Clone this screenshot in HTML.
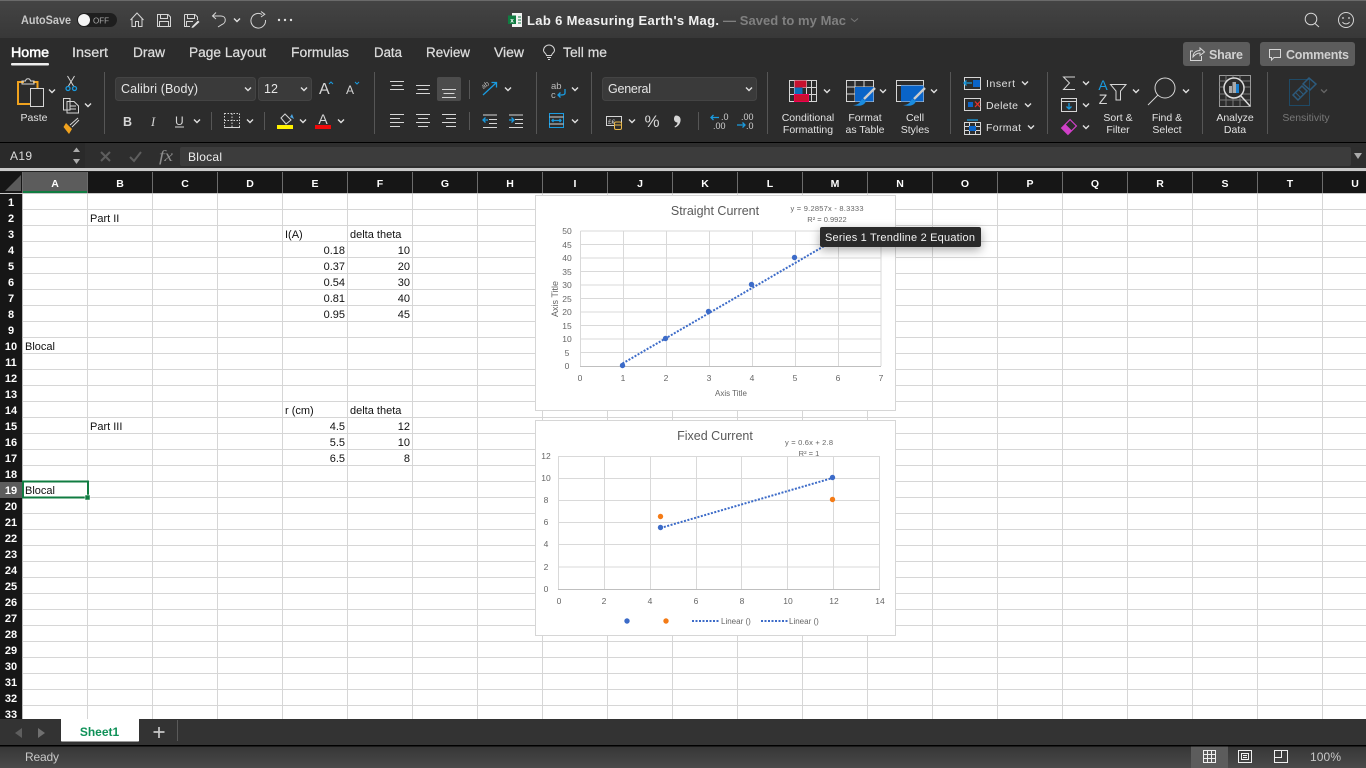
<!DOCTYPE html>
<html><head><meta charset="utf-8"><title>Lab 6 Measuring Earth's Mag.</title>
<style>
html,body{margin:0;padding:0;background:#fff;width:1366px;height:768px;overflow:hidden}
svg{display:block;font-family:"Liberation Sans",sans-serif}
.c{text-anchor:middle}.e{text-anchor:end}
.rb{font-size:10.5px;fill:#e2e2e2;text-anchor:middle}
.tab{font-size:13.5px;fill:#dcdcdc;stroke:#dcdcdc;stroke-width:.25}
.ic{fill:none;stroke:#d6d6d6;stroke-width:1}
.bl{fill:none;stroke:#1a9be0;stroke-width:1.3}
.col{font-size:10.5px;fill:#fff;text-anchor:middle;font-weight:bold}
.row{font-size:11px;fill:#fff;text-anchor:middle;font-weight:bold}
.cell{font-size:11px;fill:#111}
.ax{font-size:8.5px;fill:#666;text-anchor:middle}
.sm{font-size:7.5px;fill:#666;text-anchor:middle}
.tl{stroke:#3c6bc8;stroke-width:2;stroke-dasharray:2 1.5;fill:none}
</style></head><body>
<svg width="1366" height="768" viewBox="0 0 1366 768" xmlns="http://www.w3.org/2000/svg">
<defs>
<pattern id="g" x="23" y="194" width="65" height="16" patternUnits="userSpaceOnUse"><rect x="64" width="1" height="16" fill="#d6d6d6"/><rect y="15" width="65" height="1" fill="#d6d6d6"/></pattern>
<linearGradient id="sb" x1="0" y1="0" x2="0" y2="1"><stop offset="0" stop-color="#363636"/><stop offset="1" stop-color="#4a4a4a"/></linearGradient>
<linearGradient id="tb" x1="0" y1="0" x2="0" y2="1"><stop offset="0" stop-color="#444"/><stop offset="1" stop-color="#383838"/></linearGradient>
<path id="v" d="M-3-1.5 0 1.5 3-1.5" fill="none" stroke="#e0e0e0" stroke-width="1.4"/>
<filter id="sh" x="-20%" y="-50%" width="140%" height="220%"><feDropShadow dx="0" dy="3" stdDeviation="5" flood-color="#000" flood-opacity=".35"/></filter>
</defs>

<!-- backgrounds -->
<rect width="1366" height="38" fill="url(#tb)"/>
<rect width="1366" height="1" fill="#6a6a6a"/>
<rect y="38" width="1366" height="104" fill="#2c2c2c"/>
<rect y="142" width="1366" height="1.5" fill="#000"/>
<rect y="143" width="1366" height="25" fill="#2e2e2e"/>
<rect y="168" width="1366" height="4" fill="#c9c9c9"/>
<rect y="171" width="1366" height="1" fill="#222"/>
<rect y="194" width="1366" height="525" fill="#fff"/>
<rect x="23" y="194" width="1343" height="525" fill="url(#g)"/>

<!-- title bar -->
<text x="21" y="24" font-size="11.5" font-weight="bold" fill="#c8c8c8" textLength="50" lengthAdjust="spacingAndGlyphs">AutoSave</text>
<rect x="77" y="13" width="40" height="14" rx="7" fill="#1e1e1e"/><circle cx="84" cy="20" r="6" fill="#f4f4f4"/>
<text x="93" y="23.500" font-size="8" fill="#aaa" textLength="16">OFF</text>
<path class="ic" stroke-width="1.3" d="M130.500 20 137 13 143.500 20M132 18.500V26.500H135.500V21.500H138.500V26.500H142V18.500"/>
<path class="ic" d="M157.500 14.500H168L170.500 17V26.500H157.500ZM160.500 14.500V18.500H167.500V14.500M159.500 26.500V21.500H168.500V26.500"/>
<path class="ic" d="M184.500 14.500H195L197.500 17V20M184.500 14.500V26.500H190M187.500 14.500V18.500H194.500V14.500M186.500 26V21.500H193"/>
<path d="M192 26.500 198 20.500 199.500 22 193.500 27.500 191.500 28Z" fill="#e0e0e0"/>
<path class="ic" stroke-width="1.2" d="M216 12.500 212.500 16 216 19M212.500 16H221C226.500 16 226.500 23 222 24.500L218 27"/>
<use href="#v" x="237" y="20"/>
<path class="ic" stroke-width="1.2" d="M262 14.500A7.300 7.300 0 1 0 265.500 20M261 11.500 264.800 14.300 261 17"/>
<circle cx="279" cy="20" r="1.200" fill="#e0e0e0"/><circle cx="285" cy="20" r="1.200" fill="#e0e0e0"/><circle cx="291" cy="20" r="1.200" fill="#e0e0e0"/>

<rect x="512" y="13" width="10" height="14" fill="#f2f2f2"/><rect x="508" y="15.500" width="8" height="8.500" fill="#107c41"/>
<text x="512" y="22.500" font-size="6.500" font-weight="bold" fill="#fff" class="c">x</text>
<path d="M518 17h3M518 20h3M518 23h3" stroke="#107c41"/>
<text x="527" y="25" font-size="13" font-weight="bold" fill="#f0f0f0" textLength="192">Lab 6 Measuring Earth's Mag.</text>
<text x="723" y="25" font-size="13" font-weight="bold" fill="#808080" textLength="123">— Saved to my Mac</text>
<path d="M851 18.500 854.500 21.500 858 18.500" fill="none" stroke="#777"/>
<circle cx="1311" cy="19" r="5.800" class="ic" stroke-width="1.200"/><path class="ic" stroke-width="1.200" d="M1315 23.500 1319 27"/>
<circle cx="1346" cy="20" r="7.500" class="ic" stroke-width="1.100"/><circle cx="1343" cy="18" r=".9" fill="#ddd"/><circle cx="1349" cy="18" r=".9" fill="#ddd"/><path class="ic" d="M1342.500 22C1344 24.500 1348 24.500 1349.500 22"/>

<!-- tabs -->
<text x="11" y="57" class="tab" style="fill:#fff;stroke:#fff;stroke-width:.5" textLength="38" lengthAdjust="spacingAndGlyphs">Home</text>
<rect x="11" y="63" width="38" height="2.500" rx="1" fill="#eee"/>
<text x="72" y="57" class="tab" textLength="36" lengthAdjust="spacingAndGlyphs">Insert</text>
<text x="133" y="57" class="tab" textLength="32" lengthAdjust="spacingAndGlyphs">Draw</text>
<text x="189" y="57" class="tab" textLength="77" lengthAdjust="spacingAndGlyphs">Page Layout</text>
<text x="291" y="57" class="tab" textLength="58" lengthAdjust="spacingAndGlyphs">Formulas</text>
<text x="374" y="57" class="tab" textLength="28" lengthAdjust="spacingAndGlyphs">Data</text>
<text x="426" y="57" class="tab" textLength="44" lengthAdjust="spacingAndGlyphs">Review</text>
<text x="494" y="57" class="tab" textLength="30" lengthAdjust="spacingAndGlyphs">View</text>
<path class="ic" d="M546.500 55.500C546.500 53.500 543.500 52.500 543.500 50.500A5.500 5.500 0 0 1 554.500 50.500C554.500 52.500 551.500 53.500 551.500 55.500ZM547 57.500H551M548 59.500H550"/>
<text x="563" y="57" class="tab" textLength="44" lengthAdjust="spacingAndGlyphs">Tell me</text>
<rect x="1183" y="42" width="67" height="24" rx="3" fill="#5c5c5c"/>
<path class="ic" stroke="#bbb" d="M1193 51H1190.500V60.500H1201.500V56M1193 57C1193 52 1197 50.500 1200 50.500V48L1204.500 52 1200 55.500V53C1197 53 1195 54.500 1193 57Z"/>
<text x="1209" y="59" font-size="12.500" font-weight="bold" fill="#d0d0d0" textLength="34">Share</text>
<rect x="1260" y="42" width="95" height="24" rx="3" fill="#5c5c5c"/>
<path class="ic" d="M1269.500 49.500H1280.500V57.500H1274L1271.500 60V57.500H1269.500Z"/>
<text x="1286" y="59" font-size="12.500" font-weight="bold" fill="#d0d0d0" textLength="63">Comments</text>

<!-- separators -->
<g fill="#565656"><rect x="104" y="72" width="1" height="62"/><rect x="374" y="72" width="1" height="62"/><rect x="536" y="72" width="1" height="62"/><rect x="591" y="72" width="1" height="62"/><rect x="767" y="72" width="1" height="62"/><rect x="950" y="72" width="1" height="62"/><rect x="1047" y="72" width="1" height="62"/><rect x="1202" y="72" width="1" height="62"/><rect x="1267" y="72" width="1" height="62"/><rect x="211" y="112" width="1" height="18"/><rect x="264" y="112" width="1" height="18"/><rect x="469" y="80" width="1" height="19"/><rect x="469" y="112" width="1" height="18"/><rect x="698" y="112" width="1" height="18"/></g>

<!-- clipboard -->
<path d="M24 82H18V104H30" fill="none" stroke="#f0a21e" stroke-width="2"/><path d="M33 82H37.500V88" fill="none" stroke="#f0a21e" stroke-width="2"/>
<path class="ic" stroke="#999" d="M22 84V81H25.500C26 78 30 78 30.500 81H34V84Z"/>
<rect x="30.500" y="88.500" width="13" height="18" fill="#2c2c2c" stroke="#d6d6d6"/>
<use href="#v" x="52" y="91"/>
<text x="34" y="121" class="rb c" textLength="27">Paste</text>
<path class="ic" d="M67.500 76 73.500 86M74.500 76 68.500 86"/><circle cx="68" cy="88.500" r="2" class="bl"/><circle cx="74.500" cy="88.500" r="2" class="bl"/>
<path class="ic" d="M63.500 98.500H70V110H63.500ZM67 101.500H74L78.500 106V113H67ZM70 106H76M70 109H76"/>
<use href="#v" x="88" y="105"/>
<path d="M66 123 72 129 69 134 63.500 127Z" fill="#f0a21e"/><path class="ic" d="M70 125 78 118M72 127 79 120"/>

<!-- font -->
<rect x="115.500" y="77.500" width="140" height="23" rx="3" fill="#3a3a3a" stroke="#444"/>
<text x="121" y="93" font-size="12.500" fill="#e6e6e6" textLength="77">Calibri (Body)</text><use href="#v" x="248" y="89"/>
<rect x="258.500" y="77.500" width="53" height="23" rx="3" fill="#3a3a3a" stroke="#444"/>
<text x="264" y="93" font-size="12.500" fill="#e6e6e6">12</text><use href="#v" x="304" y="89"/>
<text x="319" y="94" font-size="16" fill="#d6d6d6">A</text><path d="M329 84 331 82 333 84" fill="none" stroke="#1a9be0"/>
<text x="346" y="94" font-size="12" fill="#d6d6d6">A</text><path d="M355 82 357 84 359 82" fill="none" stroke="#1a9be0"/>
<text x="123" y="126" font-size="12.500" font-weight="bold" fill="#d6d6d6">B</text>
<text x="151" y="126" font-size="12.500" font-style="italic" font-family="Liberation Serif" fill="#d6d6d6">I</text>
<text x="175" y="125" font-size="12" fill="#d6d6d6">U</text><rect x="175" y="126.500" width="9" height="1" fill="#d6d6d6"/>
<use href="#v" x="197" y="121"/>
<path class="ic" stroke-dasharray="1.500 1.500" d="M224.500 113.500H239.500V127.500H224.500ZM232 113.500V127.500M224.500 120.500H239.500"/><path class="ic" d="M224 127.500H240"/>
<use href="#v" x="250" y="121"/>
<path class="ic" d="M281 118 285 114 291 120 286 124Z"/><path d="M290 117 292 114 294 119Z" fill="#4aa3e0"/>
<rect x="277" y="125" width="16" height="4" fill="#fff200"/><use href="#v" x="303" y="121"/>
<text x="323" y="124" font-size="14" fill="#d6d6d6" class="c">A</text><rect x="315" y="125" width="16" height="4" fill="#ef0a0a"/><use href="#v" x="341" y="121"/>

<!-- align -->
<rect x="437" y="77" width="24" height="24" rx="2" fill="#4c4c4c"/>
<path class="ic" d="M390 81.500H404M391.500 85.500H402.500M390 89.500H404M416 85.500H430M417.500 89.500H428.500M416 93.500H430M442 89.500H456M443.500 93.500H454.500M442 97.500H456"/>
<path class="ic" d="M390 114.500H404M390 118.500H400M390 122.500H404M390 126.500H400M416 114.500H430M418 118.500H428M416 122.500H430M418 126.500H428M442 114.500H456M446 118.500H456M442 122.500H456M446 126.500H456"/>
<g transform="translate(482,80)"><text x="0" y="7" font-size="7" fill="#bbb" transform="rotate(-35 4 6)">ab</text><path class="bl" d="M1 15 14 3M9.500 2.500H14.500V7.500"/></g><use href="#v" x="508" y="89"/>
<path class="ic" d="M489 119.500H497M489 123.500H497M483 127.500H497M483 115 497 115"/><path class="bl" d="M483 120H488M485.500 117.500 483 120 485.500 122.500"/>
<path class="ic" d="M509 115 523 115M515 119.500H523M515 123.500H523M509 127.500H523"/><path class="bl" d="M509 120H514M511.500 117.500 514 120 511.500 122.500"/>
<text x="551" y="89" font-size="9.500" fill="#bbb">ab</text><text x="551" y="98" font-size="9.500" fill="#bbb">c</text><path class="bl" d="M565 89V93C565 95 563 95 558 95M560.500 92.500 558 95 560.500 97.500"/><use href="#v" x="575" y="89"/>
<rect x="549.500" y="113.500" width="14" height="14" fill="none" stroke="#1a9be0"/><path class="ic" d="M549.500 117H563.500M549.500 124H563.500"/><path class="bl" stroke-width="1" d="M552 120.500H561M553.500 119 552 120.500 553.500 122M559.500 119 561 120.500 559.500 122"/><use href="#v" x="575" y="121"/>

<!-- number -->
<rect x="602.500" y="77.500" width="154" height="23" rx="3" fill="#3a3a3a" stroke="#444"/>
<text x="608" y="93" font-size="12.500" fill="#e6e6e6" textLength="43">General</text><use href="#v" x="749" y="89"/>
<rect x="606.500" y="116.500" width="15" height="9" class="ic"/><text x="608" y="124" font-size="6.500" fill="#ccc">£€</text>
<rect x="614.500" y="122" width="7" height="7.500" rx="1.500" fill="#2c2c2c" stroke="#eab84a"/><path d="M614.500 125H621.500" stroke="#eab84a"/>
<use href="#v" x="632" y="121"/>
<text x="652" y="127" font-size="17" fill="#d6d6d6" class="c">%</text>
<path d="M676 115.500C679.500 115.500 681 118 680.500 121 680 124 678 126.500 675 127.500L674.500 126.500C676.500 125.500 677.500 124 677.500 122.500 675.500 122.500 674 121 674 119 674 117 675 115.500 676 115.500Z" fill="#d6d6d6"/>
<text x="721" y="120" font-size="9" fill="#d0d0d0">.0</text><text x="713" y="129" font-size="9" fill="#d0d0d0">.00</text><path class="bl" d="M711 117.500H719M713.500 115 711 117.500 713.500 120"/>
<text x="741" y="120" font-size="9" fill="#d0d0d0">.00</text><text x="746" y="129" font-size="9" fill="#d0d0d0">.0</text><path class="bl" d="M737 125H745M742.500 122.500 745 125 742.500 127.500"/>

<!-- styles -->
<g transform="translate(789,80)"><rect x=".5" y=".5" width="27" height="21" class="ic"/><path class="ic" d="M0.500 7.500H27.500M0.500 14.500H27.500M5.500 .5V21.500M17.500 .5V21.500M22.500 .5V21.500"/><rect x="5.500" y=".5" width="12" height="7" fill="#c8102e"/><rect x="5.500" y="7.500" width="8" height="7" fill="#0a6fb8"/><rect x="5.500" y="14.500" width="14" height="7" fill="#c8102e" stroke="#e05"/></g>
<use href="#v" x="827" y="91"/>
<text x="808" y="121" class="rb">Conditional</text><text x="808" y="133" class="rb">Formatting</text>
<g transform="translate(846,80)"><rect x=".5" y=".5" width="27" height="21" class="ic"/><path class="ic" d="M.5 7H27.500M.5 14H27.500M9 .5V21.500M18 .5V21.500"/><rect x="9" y="7" width="18.500" height="14.500" fill="#0a64c8"/><path d="M7 25C13 25 14 22 16 19L20 21C19 25 14 27 7 25Z" fill="#1a8ce0"/><path d="M18 19 29 8" stroke="#ccc" stroke-width="2.400"/></g>
<use href="#v" x="883" y="91"/>
<text x="865" y="121" class="rb">Format</text><text x="865" y="133" class="rb">as Table</text>
<g transform="translate(896,80)"><rect x=".5" y=".5" width="27" height="21" class="ic"/><path class="ic" d="M.5 5.500H27.500"/><rect x="5" y="5.500" width="22.500" height="16" fill="#0a64c8"/><path d="M7 25C13 25 14 22 16 19L20 21C19 25 14 27 7 25Z" fill="#1a8ce0"/><path d="M18 19 29 8" stroke="#ccc" stroke-width="2.400"/></g>
<use href="#v" x="934" y="91"/>
<text x="915" y="121" class="rb">Cell</text><text x="915" y="133" class="rb">Styles</text>

<!-- cells -->
<rect x="964.500" y="77.500" width="16" height="12" class="ic"/><rect x="973" y="80" width="7" height="7" fill="#0a64c8"/><path class="bl" d="M964 83H972M966.500 80.500 964 83 966.500 85.500"/>
<text x="986" y="87" class="rb" style="text-anchor:start" textLength="29">Insert</text><use href="#v" x="1025" y="83"/>
<rect x="964.500" y="98.500" width="16" height="12" class="ic"/><rect x="968" y="102" width="5" height="5" fill="#0a64c8"/><path stroke="#e8302a" stroke-width="1.300" d="M975 101.500 980 107M980 101.500 975 107"/>
<text x="986" y="109" class="rb" style="text-anchor:start" textLength="32">Delete</text><use href="#v" x="1028" y="105"/>
<rect x="964.500" y="122.500" width="16" height="12" class="ic"/><path class="ic" d="M964.500 126.500H980.500M964.500 130.500H980.500M969.500 122.500V134.500M975.500 122.500V134.500"/><rect x="969" y="126" width="7" height="5" fill="#0a64c8"/><path class="bl" stroke-width="1" d="M967 120H978"/>
<text x="986" y="131" class="rb" style="text-anchor:start" textLength="35">Format</text><use href="#v" x="1031" y="127"/>

<!-- edit -->
<path class="ic" d="M1075 77H1063.500L1069.500 83 1063.500 89.500H1075"/><use href="#v" x="1086" y="83"/>
<rect x="1061.500" y="98.500" width="15" height="13" class="ic"/><path class="ic" d="M1061.500 101.500H1076.500"/><path class="bl" d="M1069 103V109M1066.500 106.500 1069 109 1071.500 106.500"/><use href="#v" x="1086" y="105"/>
<g transform="rotate(-45 1069 127)"><rect x="1063" y="122.500" width="12" height="9" fill="none" stroke="#d040c8" stroke-width="1.200"/><rect x="1063" y="122.500" width="5.500" height="9" fill="#d040c8"/></g><use href="#v" x="1086" y="127"/>
<text x="1103" y="90" font-size="14" fill="#1a9be0" class="c">A</text><text x="1103" y="104" font-size="14" fill="#d6d6d6" class="c">Z</text>
<path class="ic" d="M1110.500 84.500H1126L1120.500 91V100H1116V91Z"/><use href="#v" x="1136" y="91"/>
<text x="1118" y="121" class="rb">Sort &amp;</text><text x="1118" y="133" class="rb">Filter</text>
<circle cx="1165" cy="88" r="10" class="ic"/><path class="ic" d="M1158 95 1148 105"/><use href="#v" x="1186" y="91"/>
<text x="1167" y="121" class="rb">Find &amp;</text><text x="1167" y="133" class="rb">Select</text>
<g transform="translate(1219,75)"><rect x=".5" y=".5" width="31" height="31" fill="none" stroke="#999"/><path stroke="#777" fill="none" d="M.5 6H31M.5 12H31M.5 19H31M.5 25H31M7 .5V31M14 .5V31M21 .5V31"/><circle cx="15" cy="13" r="10" fill="#2c2c2c" stroke="#ddd" stroke-width="1.500"/><rect x="10" y="11" width="3" height="7" fill="#aaa"/><rect x="13.500" y="7" width="3.500" height="11" fill="#aaa"/><rect x="17" y="9" width="3" height="9" fill="#1a80d0"/><path d="M22 21 31 31" stroke="#ddd" stroke-width="1.500"/></g>
<text x="1235" y="121" class="rb">Analyze</text><text x="1235" y="133" class="rb">Data</text>
<g transform="translate(1289,77)"><rect x=".5" y="2.500" width="20" height="26" fill="none" stroke="#1f4a66"/><path d="M4 18 13 9 18 14 9 23Z" fill="none" stroke="#2c5a7c" stroke-width="1.500"/><path d="M14 7 20 1 27 7 21 13Z" fill="none" stroke="#2c5a7c" stroke-width="1.500"/><path d="M7 16 12 21M10 13 15 18" stroke="#2c5a7c"/></g>
<path d="M1321 89.500 1324 92.500 1327 89.500" fill="none" stroke="#666" stroke-width="1.300"/>
<text x="1306" y="121" class="rb" style="fill:#777">Sensitivity</text>

<!-- formula bar -->
<rect x="0" y="143" width="85" height="25" fill="#2a2a2a"/>
<text x="10" y="160" font-size="12" fill="#dcdcdc" textLength="22">A19</text>
<path d="M73 152 76.500 147.500 80 152ZM73 159 76.500 164 80 159Z" fill="#aaa"/>
<path stroke="#5e5e5e" stroke-width="2" d="M101 152 110 161M110 152 101 161"/>
<path stroke="#5e5e5e" stroke-width="2" fill="none" d="M130 157 134 161 141 152"/>
<text x="159" y="161" font-size="16" font-style="italic" font-family="Liberation Serif" fill="#8e8e8e" textLength="14" lengthAdjust="spacingAndGlyphs">fx</text>
<rect x="180" y="147" width="1171" height="19" rx="2" fill="#3c3c3c"/>
<text x="188" y="161" font-size="12" fill="#eee" textLength="34">Blocal</text>
<path d="M1354 153H1362L1358 159Z" fill="#aaa"/>

<!-- column headers -->
<rect y="172" width="1366" height="21" fill="#161616"/><rect y="193" width="1366" height="1" fill="#c8c8c8"/>
<path d="M21 175V191H5Z" fill="#5a5a5a"/>
<rect x="23" y="172" width="65" height="21" fill="#5c5c5c"/><rect x="23" y="191" width="65" height="2" fill="#107c41"/>
<g fill="#6c6c6c"><rect x="22" y="172" width="1" height="21"/><rect x="87" y="172" width="1" height="21"/><rect x="152" y="172" width="1" height="21"/><rect x="217" y="172" width="1" height="21"/><rect x="282" y="172" width="1" height="21"/><rect x="347" y="172" width="1" height="21"/><rect x="412" y="172" width="1" height="21"/><rect x="477" y="172" width="1" height="21"/><rect x="542" y="172" width="1" height="21"/><rect x="607" y="172" width="1" height="21"/><rect x="672" y="172" width="1" height="21"/><rect x="737" y="172" width="1" height="21"/><rect x="802" y="172" width="1" height="21"/><rect x="867" y="172" width="1" height="21"/><rect x="932" y="172" width="1" height="21"/><rect x="997" y="172" width="1" height="21"/><rect x="1062" y="172" width="1" height="21"/><rect x="1127" y="172" width="1" height="21"/><rect x="1192" y="172" width="1" height="21"/><rect x="1257" y="172" width="1" height="21"/><rect x="1322" y="172" width="1" height="21"/></g>
<text x="55" y="187" class="col">A</text><text x="120" y="187" class="col">B</text><text x="185" y="187" class="col">C</text><text x="250" y="187" class="col">D</text><text x="315" y="187" class="col">E</text><text x="380" y="187" class="col">F</text><text x="445" y="187" class="col">G</text><text x="510" y="187" class="col">H</text><text x="575" y="187" class="col">I</text><text x="640" y="187" class="col">J</text><text x="705" y="187" class="col">K</text><text x="770" y="187" class="col">L</text><text x="835" y="187" class="col">M</text><text x="900" y="187" class="col">N</text><text x="965" y="187" class="col">O</text><text x="1030" y="187" class="col">P</text><text x="1095" y="187" class="col">Q</text><text x="1160" y="187" class="col">R</text><text x="1225" y="187" class="col">S</text><text x="1290" y="187" class="col">T</text><text x="1355" y="187" class="col">U</text>

<!-- row headers -->
<rect y="194" width="22" height="525" fill="#161616"/><rect x="22" y="194" width="1" height="525" fill="#bbb"/>
<rect y="482" width="22" height="16" fill="#5c5c5c"/>
<text x="11" y="206" class="row">1</text><text x="11" y="222" class="row">2</text><text x="11" y="238" class="row">3</text><text x="11" y="254" class="row">4</text><text x="11" y="270" class="row">5</text><text x="11" y="286" class="row">6</text><text x="11" y="302" class="row">7</text><text x="11" y="318" class="row">8</text><text x="11" y="334" class="row">9</text><text x="11" y="350" class="row">10</text><text x="11" y="366" class="row">11</text><text x="11" y="382" class="row">12</text><text x="11" y="398" class="row">13</text><text x="11" y="414" class="row">14</text><text x="11" y="430" class="row">15</text><text x="11" y="446" class="row">16</text><text x="11" y="462" class="row">17</text><text x="11" y="478" class="row">18</text><text x="11" y="494" class="row">19</text><text x="11" y="510" class="row">20</text><text x="11" y="526" class="row">21</text><text x="11" y="542" class="row">22</text><text x="11" y="558" class="row">23</text><text x="11" y="574" class="row">24</text><text x="11" y="590" class="row">25</text><text x="11" y="606" class="row">26</text><text x="11" y="622" class="row">27</text><text x="11" y="638" class="row">28</text><text x="11" y="654" class="row">29</text><text x="11" y="670" class="row">30</text><text x="11" y="686" class="row">31</text><text x="11" y="702" class="row">32</text><text x="11" y="718" class="row">33</text>

<!-- cells text -->
<g class="cell">
<text x="90" y="222">Part II</text>
<text x="285" y="238">I(A)</text><text x="350" y="238">delta theta</text>
<text x="345" y="254" class="e">0.18</text><text x="410" y="254" class="e">10</text>
<text x="345" y="270" class="e">0.37</text><text x="410" y="270" class="e">20</text>
<text x="345" y="286" class="e">0.54</text><text x="410" y="286" class="e">30</text>
<text x="345" y="302" class="e">0.81</text><text x="410" y="302" class="e">40</text>
<text x="345" y="318" class="e">0.95</text><text x="410" y="318" class="e">45</text>
<text x="25" y="350">Blocal</text>
<text x="285" y="414">r (cm)</text><text x="350" y="414">delta theta</text>
<text x="90" y="430">Part III</text>
<text x="345" y="430" class="e">4.5</text><text x="410" y="430" class="e">12</text>
<text x="345" y="446" class="e">5.5</text><text x="410" y="446" class="e">10</text>
<text x="345" y="462" class="e">6.5</text><text x="410" y="462" class="e">8</text>
<text x="25" y="494">Blocal</text>
</g>
<rect x="23" y="481.500" width="65" height="16" fill="none" stroke="#107c41" stroke-width="2"/>
<rect x="85" y="495" width="5" height="5" fill="#107c41" stroke="#fff" stroke-width=".5"/>

<!-- chart 1 -->
<rect x="535.500" y="195.500" width="360" height="215" fill="#fff" stroke="#d6d6d6"/>
<text x="715" y="215" font-size="12.500" fill="#595959" class="c">Straight Current</text>
<text x="827" y="211" class="sm" textLength="73">y = 9.2857x - 8.3333</text>
<text x="827" y="222" class="sm">R² = 0.9922</text>
<path fill="none" stroke="#d9d9d9" d="M580.500 231H881M580.500 244.500H881M580.500 258H881M580.500 271.500H881M580.500 285H881M580.500 298.500H881M580.500 312H881M580.500 325.500H881M580.500 339H881M580.500 352.500H881M623.500 231V366M666.500 231V366M709.500 231V366M752.500 231V366M795.500 231V366M838.500 231V366M881 231V366M580.500 231V366"/>
<path stroke="#bfbfbf" d="M580 366.500H881"/>
<text x="567" y="234" class="ax">50</text><text x="567" y="248" class="ax">45</text><text x="567" y="261" class="ax">40</text><text x="567" y="275" class="ax">35</text><text x="567" y="288" class="ax">30</text><text x="567" y="302" class="ax">25</text><text x="567" y="315" class="ax">20</text><text x="567" y="329" class="ax">15</text><text x="567" y="342" class="ax">10</text><text x="567" y="356" class="ax">5</text><text x="567" y="369" class="ax">0</text>
<text x="580" y="381" class="ax">0</text><text x="623" y="381" class="ax">1</text><text x="666" y="381" class="ax">2</text><text x="709" y="381" class="ax">3</text><text x="752" y="381" class="ax">4</text><text x="795" y="381" class="ax">5</text><text x="838" y="381" class="ax">6</text><text x="881" y="381" class="ax">7</text>
<text x="731" y="396" class="sm" style="font-size:8px">Axis Title</text>
<text transform="translate(558,299) rotate(-90)" class="sm" style="font-size:9px">Axis Title</text>
<path d="M622.500 363.500 838 238" class="tl"/>
<g fill="#3c6bc8"><circle cx="622.500" cy="365.500" r="2.700"/><circle cx="665.500" cy="338.500" r="2.700"/><circle cx="708.500" cy="311.500" r="2.700"/><circle cx="751.500" cy="284.500" r="2.700"/><circle cx="794.500" cy="257.500" r="2.700"/></g>
<rect x="820" y="227" width="161" height="20" rx="2" fill="#2b2b2b" filter="url(#sh)"/>
<text x="825" y="241" font-size="11" fill="#f2f2f2" textLength="150">Series 1 Trendline 2 Equation</text>

<!-- chart 2 -->
<rect x="535.500" y="420.500" width="360" height="215" fill="#fff" stroke="#d6d6d6"/>
<text x="715" y="440" font-size="12.500" fill="#595959" class="c">Fixed Current</text>
<text x="809" y="445" class="sm" textLength="48">y = 0.6x + 2.8</text>
<text x="809" y="456" class="sm">R² = 1</text>
<path fill="none" stroke="#d9d9d9" d="M558 456.500H879.500M558 478.500H879.500M558 500.500H879.500M558 522.500H879.500M558 544.500H879.500M558 567H879.500M604.500 456V589M650.500 456V589M696.500 456V589M741.500 456V589M787.500 456V589M833.500 456V589M879.500 456V589M558.500 456V589"/>
<path stroke="#bfbfbf" d="M558 589.500H880"/>
<text x="546" y="459" class="ax">12</text><text x="546" y="481" class="ax">10</text><text x="546" y="503" class="ax">8</text><text x="546" y="525" class="ax">6</text><text x="546" y="547" class="ax">4</text><text x="546" y="570" class="ax">2</text><text x="546" y="592" class="ax">0</text>
<text x="559" y="604" class="ax">0</text><text x="604" y="604" class="ax">2</text><text x="650" y="604" class="ax">4</text><text x="696" y="604" class="ax">6</text><text x="742" y="604" class="ax">8</text><text x="788" y="604" class="ax">10</text><text x="834" y="604" class="ax">12</text><text x="880" y="604" class="ax">14</text>
<path d="M660.500 528 832.500 478" class="tl"/>
<circle cx="660.500" cy="527.500" r="2.700" fill="#3c6bc8"/><circle cx="832.500" cy="477.500" r="2.700" fill="#3c6bc8"/>
<circle cx="660.500" cy="516.500" r="2.700" fill="#f47b16"/><circle cx="832.500" cy="499.500" r="2.700" fill="#f47b16"/>
<circle cx="627" cy="621" r="2.700" fill="#3c6bc8"/><circle cx="666" cy="621" r="2.700" fill="#f47b16"/>
<path d="M692 621H719M761 621H788" class="tl"/>
<text x="721" y="624" class="sm" style="text-anchor:start;font-size:8px">Linear ()</text>
<text x="789" y="624" class="sm" style="text-anchor:start;font-size:8px">Linear ()</text>

<!-- sheet tabs -->
<rect y="719" width="1366" height="26" fill="#333"/>
<rect y="745" width="1366" height="1.500" fill="#000"/>
<path d="M22 728V738L15 733Z" fill="#5e5e5e"/><path d="M38 728V738L45 733Z" fill="#707070"/>
<path d="M61 719H139V741Q139 741.500 137 741.500H63Q61 741.500 61 741Z" fill="#fff"/>
<text x="99.500" y="736" font-size="12" font-weight="bold" fill="#0f9158" class="c">Sheet1</text>
<path d="M159 727V738M153.500 732H164.500" stroke="#c8c8c8" stroke-width="1.700"/>
<rect x="177" y="720" width="1" height="21" fill="#5a5a5a"/>

<!-- status bar -->
<rect y="746.500" width="1366" height="21.500" fill="url(#sb)"/>
<text x="25" y="761" font-size="12" fill="#c8c8c8" textLength="34">Ready</text>
<rect x="1191" y="746.500" width="37" height="21.500" fill="#5c5c5c"/>
<path fill="none" stroke="#f0f0f0" d="M1203.500 750.500H1215.500V762.500H1203.500ZM1203.500 754.500H1215.500M1203.500 758.500H1215.500M1207.500 750.500V762.500M1211.500 750.500V762.500"/>
<path fill="none" stroke="#f0f0f0" d="M1238.500 750.500H1251.500V762.500H1238.500Z"/><path fill="none" stroke="#f0f0f0" d="M1241.500 753.500H1248.500V759.500H1241.500ZM1243 755.500H1247M1243 757.500H1247"/>
<path fill="none" stroke="#f0f0f0" d="M1274.500 750.500H1287.500V762.500H1274.500ZM1274.500 757.500H1281.500V750.500"/>
<text x="1310" y="761" font-size="12" fill="#c8c8c8" textLength="31">100%</text>
</svg>
</body></html>
